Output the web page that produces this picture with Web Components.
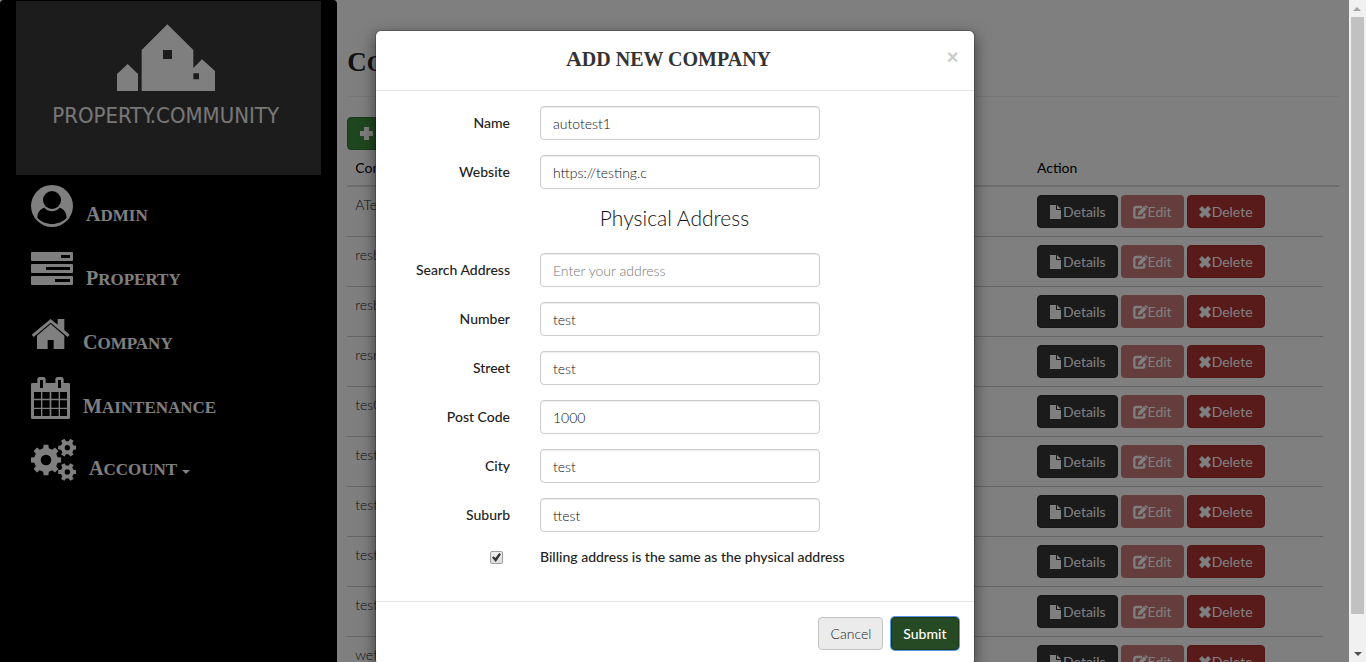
<!DOCTYPE html>
<html lang="en">
<head>
<meta charset="utf-8">
<title>Companies</title>
<style>
html, body { margin: 0; height: 100%; }
body { font: 14px/20px Lato, "Liberation Sans", sans-serif; color: #333; background: #fff; }
</style>
</head>
<body>
<app-shell>
  <side-nav slot="nav"></side-nav>
  <company-list slot="main"></company-list>
  <modal-dialog slot="modal">
    <span slot="title">Add new company</span>
    <company-form></company-form>
    <ui-button slot="footer" kind="default">Cancel</ui-button>
    <ui-button slot="footer" kind="primary">Submit</ui-button>
  </modal-dialog>
</app-shell>
<script>
const define = (name, html, setup) => {
  const template = document.createElement('template');
  template.innerHTML = html;
  customElements.define(name, class extends HTMLElement {
    constructor() {
      super();
      this.attachShadow({ mode: 'open' }).append(template.content.cloneNode(true));
    }
    connectedCallback() { if (setup) setup(this, this.shadowRoot); }
  });
};

/* Toothed wheel outline with a round hole, as one even-odd path */
const gear = (cx, cy, outer, inner, hole, teeth) => {
  const pts = [];
  const step = 2 * Math.PI / teeth;
  for (let i = 0; i < teeth; i++) {
    const a = i * step;
    for (const [r, d] of [[inner, -.3], [outer, -.2], [outer, .2], [inner, .3]]) {
      pts.push((cx + r * Math.cos(a + d * step)).toFixed(1) + ' ' + (cy + r * Math.sin(a + d * step)).toFixed(1));
    }
  }
  return `M${pts.join('L')}ZM${cx - hole} ${cy}a${hole} ${hole} 0 1 0 ${2 * hole} 0a${hole} ${hole} 0 1 0 ${-2 * hole} 0Z`;
};

const icons = {
  user: ['93 24 126 138', 42, 46, '<circle cx="156" cy="93" r="63"/><circle cx="156" cy="75" r="27" fill="#000"/><path fill="#000" d="M112 128C112 113 121 100 133 98C145 112 167 112 179 98C191 100 200 113 200 128C178 153 134 153 112 128Z"/>'],
  tasks: ['93 216 126 138', 42, 46, '<path fill-rule="evenodd" d="M95 231H217l2 2V256l-2 2H95l-2-2V233ZM183 240V249H210V240ZM95 267H217l2 2V292l-2 2H95l-2-2V269ZM138 276V285H210V276ZM95 303H217l2 2V328l-2 2H95l-2-2V305ZM165 312V321H210V312Z"/>'],
  home: ['93 33 117 138', 39, 46, '<path d="M152 57L173 74V57H193V90L209 104L203 111L152 68L101 111L95 104ZM152 72L193 107V147H161V120H143V147H111V107Z"/>'],
  calendar: ['93 225 117 138', 39, 46, '<path fill-rule="evenodd" d="M97 249H112V238a7 7 0 0 1 7-7h11a7 7 0 0 1 7 7V249H166V238a7 7 0 0 1 7-7h11a7 7 0 0 1 7 7V249H206a4 4 0 0 1 4 4V353a4 4 0 0 1-4 4H97a4 4 0 0 1-4-4V253a4 4 0 0 1 4-4ZM120 240V264H129V240ZM174 240V264H183V240ZM102 276V296H123V276ZM127 276V296H149V276ZM154 276V296H176V276ZM180 276V296H201V276ZM102 301V323H123V301ZM127 301V323H149V301ZM154 301V323H176V301ZM180 301V323H201V301ZM102 327V348H123V327ZM127 327V348H149V327ZM154 327V348H176V327ZM180 327V348H201V327Z"/>'],
  gears: ['93 417 135 138', 45, 46, `<path fill-rule="evenodd" d="${gear(138, 480, 46, 36, 16, 8)}${gear(202, 443, 28, 20, 8, 6)}${gear(202, 516, 28, 20, 8, 6)}"/>`],
  plus: ['0 0 13 13', 13, 13, '<path d="M4 0H9V4H13V9H9V13H4V9H0V4H4Z"/>'],
  file: ['0 0 42 42', 14, 14, '<path d="M3 0H21V15H36V42H3ZM24 0L36 12H24Z"/>'],
  edit: ['0 0 45 42', 15, 14, '<path fill="none" stroke="currentColor" stroke-width="7" d="M27 6H10Q4 6 4 12V32Q4 38 10 38H28Q34 38 34 32V25"/><path d="M14 31L17 20L33 4L41 12L25 28ZM35 3L38 0L45 6L42 10Z"/>'],
  remove: ['0 0 39 36', 13, 12, '<path d="M9 0L18 9L27 0L36 9L27 18L36 27L27 36L18 27L9 36L0 27L9 18L0 9Z"/>']
};

define('ui-icon', `<style>:host { display: inline-block; line-height: 0; } svg { display: block; fill: currentColor; }</style><svg aria-hidden="true"></svg>`, (el, root) => {
  const [box, w, h, body] = icons[el.getAttribute('name')];
  const svg = root.querySelector('svg');
  svg.setAttribute('viewBox', box);
  svg.setAttribute('width', w);
  svg.setAttribute('height', h);
  svg.innerHTML = body;
});

define('app-shell', `<style>
:host { display: flex; height: 100vh; overflow: hidden; }
.view { flex: 1; min-width: 0; position: relative; display: flex; overflow: hidden; }
.side { flex: 0 0 25%; min-width: 0; display: flex; }
.main { flex: 1; min-width: 0; }
.backdrop { position: absolute; inset: 0; background: rgba(0,0,0,.5); overflow: hidden; padding: 30px 0; }
</style>
<div class="view">
  <div class="side"><slot name="nav"></slot></div>
  <main class="main"><slot name="main"></slot></main>
  <div class="backdrop"><slot name="modal"></slot></div>
</div>
<scroll-bar></scroll-bar>`);

define('scroll-bar', `<style>
:host { display: flex; flex-direction: column; flex: 0 0 17px; background: #f1f1f1; }
svg { display: block; flex: none; }
.track { flex: 1; padding: 0 2px; }
.thumb { height: 95%; background: #c1c1c1; }
</style>
<svg width="17" height="17"><path d="M4 11L8 7L12 11Z" fill="#a3a3a3"/></svg>
<div class="track"><div class="thumb"></div></div>
<svg width="17" height="17"><path d="M5 7L9 11L13 7Z" fill="#505050"/></svg>`);

define('side-nav', `<style>
:host { display: block; flex: 1; min-width: 0; background: #000; border-radius: 4px 4px 0 0; padding: 1px 16px; }
nav { display: flex; flex-direction: column; }
</style>
<site-logo></site-logo>
<nav>
  <nav-item icon="user">Admin</nav-item>
  <nav-item icon="tasks">Property</nav-item>
  <nav-item icon="home">Company</nav-item>
  <nav-item icon="calendar">Maintenance</nav-item>
  <nav-item icon="gears" menu>Account</nav-item>
</nav>`);

define('site-logo', `<style>
:host { display: flex; flex-direction: column; align-items: center; height: 174px; background: #3a3839; color: #fff; padding: 23px 6px 0 0; box-sizing: border-box; }
svg { display: block; }
span { font: 22px/30px "DejaVu Sans Condensed", "Liberation Sans", sans-serif; margin-top: 9px; color: #eee; }
</style>
<svg width="98" height="68" viewBox="351 72 294 204" fill="#fff" aria-hidden="true"><path fill-rule="evenodd" d="M351 273V222L383 192L414 222V273ZM425 273V150L502 73L580 150V204L606 178L645 213V273ZM489 150V177H516V150ZM580 220V238H597V220Z"/></svg>
<span>PROPERTY.COMMUNITY</span>`);

define('nav-item', `<style>
:host { display: block; }
a { display: flex; height: 64px; padding: 8px 15px 10px; box-sizing: border-box; gap: 13px; color: #fff; text-decoration: none; }
.text { display: block; font: bold 17px/24px "Liberation Serif", serif; text-transform: uppercase; padding-top: 19px; }
.text::first-letter { font-size: 20px; }
.caret { display: none; align-self: flex-start; margin: 31px 0 0 -8px; border: 4px solid transparent; border-top-color: #fff; border-bottom: 0; }
:host([menu]) .caret { display: block; }
:host([menu]) .text { padding-top: 17px; }
</style>
<a href="#"><span class="text"><slot></slot></span><i class="caret"></i></a>`, (el, root) => {
  const icon = document.createElement('ui-icon');
  icon.setAttribute('name', el.getAttribute('icon'));
  root.querySelector('a').prepend(icon);
});

define('ui-button', `<style>
:host { display: inline-block; vertical-align: top; }
button { display: flex; align-items: center; height: 33px; padding: 0 11px; border: 1px solid transparent; border-radius: 4px; font: inherit; color: #fff; white-space: nowrap; cursor: pointer; }
:host([kind=default]) button { background: #ebebeb; border-color: #c3c3c3; color: #222; font-weight: 300; }
:host([kind=primary]) button { background: #264a24; border-color: #1d381b; box-shadow: 0 0 0 1px #5b97e8; font-weight: 500; }
:host([kind=add]) button { background: #3e8e3e; border-color: #347834; gap: 6px; padding: 0 12px; }
:host([kind=dark]) button { background: #373737; border-color: #2c2c2c; }
:host([kind=edit]) button { background: #b33434; opacity: .65; }
:host([kind=danger]) button { background: #b33434; border-color: #a52e2e; }
</style>
<button type="button"><slot></slot></button>`);

define('company-list', `<style>
:host { display: block; padding: 40px 10px 0; color: #222; }
h1 { margin: 0; height: 57px; box-sizing: border-box; border-bottom: 1px solid #eee; font: bold 24px/44px "Liberation Serif", serif; text-transform: uppercase; }
h1::first-letter { font-size: 27px; }
.tools { padding: 20px 0 0; }
table { width: 100%; border-collapse: separate; border-spacing: 0; table-layout: fixed; }
th { text-align: left; font-weight: 400; color: #000; padding: 8px; line-height: 19px; border-bottom: 2px solid #ddd; }
td { height: 49px; box-sizing: border-box; padding: 8px; vertical-align: top; border-bottom: 1px solid #ccc; font-weight: 300; }
.act { width: 278px; }
.pad { width: 16px; padding: 0; }
td.pad { border: 0; }
.row { display: flex; gap: 3px; font-weight: 400; }
</style>
<h1>Companies</h1>
<div class="tools"><ui-button kind="add"><ui-icon name="plus"></ui-icon>Add new company</ui-button></div>
<table>
  <thead><tr><th>Company</th><th class="act">Action</th><th class="pad"></th></tr></thead>
  <tbody></tbody>
</table>`, (el, root) => {
  const names = ['ATest', 'resb', 'resb', 'resn', 'tesG', 'test', 'test', 'test', 'test', 'wef'];
  root.querySelector('tbody').innerHTML = names.map(name => `<tr><td>${name}</td><td><div class="row">
<ui-button kind="dark"><ui-icon name="file"></ui-icon>Details</ui-button>
<ui-button kind="edit"><ui-icon name="edit"></ui-icon>Edit</ui-button>
<ui-button kind="danger"><ui-icon name="remove"></ui-icon>Delete</ui-button></div></td><td class="pad"></td></tr>`).join('');
});

define('modal-dialog', `<style>
:host { display: block; max-width: 600px; margin: 0 auto; box-sizing: border-box; background: #fff; border: 1px solid rgba(0,0,0,.2); border-radius: 6px; background-clip: padding-box; box-shadow: 0 5px 15px rgba(0,0,0,.5); }
header { position: relative; padding: 15px; height: 60px; box-sizing: border-box; border-bottom: 1px solid #e5e5e5; }
h2 { margin: 0; text-align: center; font: bold 20px/26px "Liberation Serif", serif; text-transform: uppercase; padding-right: 12px; }
h2::first-letter { font-size: 22px; }
.close { position: absolute; right: 15px; top: 16px; padding: 0; border: 0; background: none; font: bold 20px/20px "Liberation Sans", sans-serif; color: #ccc; }
.body { padding: 15px 0 34px; }
footer { display: flex; justify-content: flex-end; gap: 8px; padding: 15px; border-top: 1px solid #e5e5e5; }
</style>
<header><h2><slot name="title"></slot></h2><button class="close" type="button" aria-label="Close">×</button></header>
<div class="body"><slot></slot></div>
<footer><slot name="footer"></slot></footer>`);

define('company-form', `<style>
:host { display: block; }
form { display: grid; gap: 15px; }
h3 { margin: 0; text-align: center; font-weight: 300; font-size: 21px; line-height: 28px; padding-bottom: 6px; color: #111; }
</style>
<form>
  <form-field label="Name" value="autotest1"></form-field>
  <form-field label="Website" value="https://testing.c"></form-field>
  <h3>Physical Address</h3>
  <form-field label="Search Address" placeholder="Enter your address"></form-field>
  <form-field label="Number" value="test"></form-field>
  <form-field label="Street" value="test"></form-field>
  <form-field label="Post Code" value="1000"></form-field>
  <form-field label="City" value="test"></form-field>
  <form-field label="Suburb" value="ttest"></form-field>
  <check-field>Billing address is the same as the physical address</check-field>
</form>`);

define('form-field', `<style>
:host { display: grid; grid-template-columns: 25% 1fr; }
label { text-align: right; font-weight: 500; color: #222; padding: 7px 15px 0 0; }
.control { padding: 0 15px; }
input { display: block; width: 100%; max-width: 280px; height: 34px; box-sizing: border-box; padding: 6px 12px; border: 1px solid #ccc; border-radius: 4px; font: inherit; font-weight: 300; color: #111; background: #fff; box-shadow: inset 0 1px 1px rgba(0,0,0,.075); outline: 0; }
input::placeholder { color: #777; }
</style>
<label for="input"></label><div class="control"><input id="input" type="text"></div>`, (el, root) => {
  root.querySelector('label').textContent = el.getAttribute('label');
  const input = root.querySelector('input');
  input.value = el.getAttribute('value') || '';
  input.placeholder = el.getAttribute('placeholder') || '';
});

define('check-field', `<style>
:host { display: grid; grid-template-columns: 25% 1fr; }
.box { display: flex; justify-content: flex-end; padding: 4px 22px 0 0; }
input { appearance: none; margin: 0; width: 13px; height: 13px; border: 1px solid #a0a0a0; border-radius: 2px; background: linear-gradient(#eee, #ddd); display: grid; place-items: center; }
input:checked::before { content: ""; width: 9px; height: 9px; background: #333; clip-path: polygon(0 50%, 18% 35%, 38% 55%, 80% 0, 100% 14%, 42% 100%); }
label { padding: 0 15px; font-weight: 500; color: #222; }
</style>
<div class="box"><input id="check" type="checkbox" checked></div><label for="check"><slot></slot></label>`);
</script>
</body>
</html>
